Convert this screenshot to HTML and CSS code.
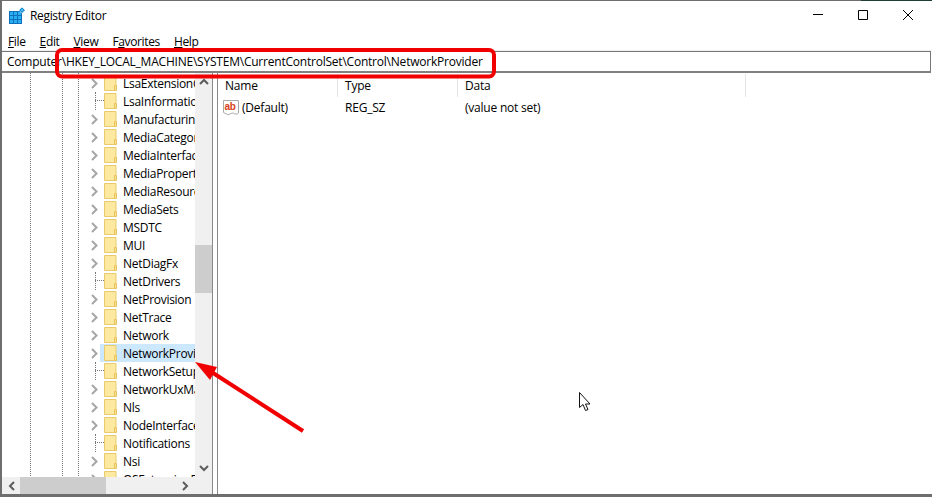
FILE: index.html
```html
<!DOCTYPE html>
<html lang="en">
<head>
<meta charset="utf-8">
<title>Registry Editor</title>
<link rel="stylesheet" href="styles.css">
</head>
<body>
<svg class="defs" width="0" height="0" aria-hidden="true">
  <defs>
    <symbol id="folder" viewBox="0 0 13 16">
      <path d="M.5.5h11.500v15H.5z" fill="#fde9a0" stroke="#e9cb6e"/>
      <path d="M10.500 15.500V10.500h2v5z" fill="#f9e08c" stroke="#e9c45c"/>
    </symbol>
    <symbol id="chev" viewBox="0 0 7 11">
      <path d="M1 1l4.500 4.500L1 10" fill="none" stroke="#a6a6a6" stroke-width="2"/>
    </symbol>
  </defs>
</svg>
<div class="window">
  <header class="titlebar">
    <svg class="appicon" viewBox="0 0 16 17" width="16" height="17">
      <path d="M0 4h13v13H0z" fill="#0f6fb8"/>
      <path d="M1 5h3v3H1zM5 5h3v3H5zM9 5h3v3H9zM1 9h3v3H1zM5 9h3v3H5zM9 9h3v3H9zM1 13h3v3H1zM5 13h3v3H5zM9 13h3v3H9z" fill="#2aaef2"/>
      <path d="M13 0l3.200 3.200L13 6.400 9.800 3.200z" fill="#1787cf" stroke="#fff" stroke-width=".6"/>
      <path d="M13 1.800l1.400 1.400L13 4.600l-1.400-1.400z" fill="#58c4f5"/>
    </svg>
    <span class="title">Registry Editor</span>
    <div class="controls">
      <svg width="12" height="12" viewBox="0 0 12 12"><path d="M1 5.500h10" stroke="#000" fill="none"/></svg>
      <svg width="12" height="12" viewBox="0 0 12 12"><path d="M1.500 1.500h9v9h-9z" stroke="#000" fill="none"/></svg>
      <svg width="12" height="12" viewBox="0 0 12 12"><path d="M1 1l10 10M11 1L1 11" stroke="#000" fill="none"/></svg>
    </div>
  </header>
  <nav class="menubar">
    <span><u>F</u>ile</span><span><u>E</u>dit</span><span><u>V</u>iew</span><span>F<u>a</u>vorites</span><span><u>H</u>elp</span>
  </nav>
  <div class="address">Computer\HKEY_LOCAL_MACHINE\SYSTEM\CurrentControlSet\Control\NetworkProvider</div>
  <main class="panes">
    <section class="treepane">
      <div class="treeview">
        <ul class="tree">
          <li class="row"><svg class="chev"><use href="#chev"/></svg><svg class="folder"><use href="#folder"/></svg><span class="name">LsaExtensionConfig</span></li>
          <li class="row leaf"><svg class="folder"><use href="#folder"/></svg><span class="name">LsaInformation</span></li>
          <li class="row"><svg class="chev"><use href="#chev"/></svg><svg class="folder"><use href="#folder"/></svg><span class="name">ManufacturingMode</span></li>
          <li class="row"><svg class="chev"><use href="#chev"/></svg><svg class="folder"><use href="#folder"/></svg><span class="name">MediaCategories</span></li>
          <li class="row"><svg class="chev"><use href="#chev"/></svg><svg class="folder"><use href="#folder"/></svg><span class="name">MediaInterfaces</span></li>
          <li class="row"><svg class="chev"><use href="#chev"/></svg><svg class="folder"><use href="#folder"/></svg><span class="name">MediaProperties</span></li>
          <li class="row"><svg class="chev"><use href="#chev"/></svg><svg class="folder"><use href="#folder"/></svg><span class="name">MediaResources</span></li>
          <li class="row"><svg class="chev"><use href="#chev"/></svg><svg class="folder"><use href="#folder"/></svg><span class="name">MediaSets</span></li>
          <li class="row"><svg class="chev"><use href="#chev"/></svg><svg class="folder"><use href="#folder"/></svg><span class="name">MSDTC</span></li>
          <li class="row"><svg class="chev"><use href="#chev"/></svg><svg class="folder"><use href="#folder"/></svg><span class="name">MUI</span></li>
          <li class="row"><svg class="chev"><use href="#chev"/></svg><svg class="folder"><use href="#folder"/></svg><span class="name">NetDiagFx</span></li>
          <li class="row leaf"><svg class="folder"><use href="#folder"/></svg><span class="name">NetDrivers</span></li>
          <li class="row"><svg class="chev"><use href="#chev"/></svg><svg class="folder"><use href="#folder"/></svg><span class="name">NetProvision</span></li>
          <li class="row"><svg class="chev"><use href="#chev"/></svg><svg class="folder"><use href="#folder"/></svg><span class="name">NetTrace</span></li>
          <li class="row"><svg class="chev"><use href="#chev"/></svg><svg class="folder"><use href="#folder"/></svg><span class="name">Network</span></li>
          <li class="row selected"><svg class="chev"><use href="#chev"/></svg><svg class="folder"><use href="#folder"/></svg><span class="name">NetworkProvider</span></li>
          <li class="row leaf"><svg class="folder"><use href="#folder"/></svg><span class="name">NetworkSetup2</span></li>
          <li class="row"><svg class="chev"><use href="#chev"/></svg><svg class="folder"><use href="#folder"/></svg><span class="name">NetworkUxManager</span></li>
          <li class="row"><svg class="chev"><use href="#chev"/></svg><svg class="folder"><use href="#folder"/></svg><span class="name">Nls</span></li>
          <li class="row"><svg class="chev"><use href="#chev"/></svg><svg class="folder"><use href="#folder"/></svg><span class="name">NodeInterfaces</span></li>
          <li class="row leaf"><svg class="folder"><use href="#folder"/></svg><span class="name">Notifications</span></li>
          <li class="row"><svg class="chev"><use href="#chev"/></svg><svg class="folder"><use href="#folder"/></svg><span class="name">Nsi</span></li>
          <li class="row"><svg class="chev"><use href="#chev"/></svg><svg class="folder"><use href="#folder"/></svg><span class="name">OSExtensionDatabase</span></li>
        </ul>
        <div class="vscroll">
          <svg class="sb-arrow" width="10" height="7" viewBox="0 0 10 7"><path d="M1 6l4-4 4 4" fill="none" stroke="#5c5c5c" stroke-width="2"/></svg>
          <div class="vtrack"><div class="vthumb"></div></div>
          <svg class="sb-arrow" width="10" height="7" viewBox="0 0 10 7"><path d="M1 1l4 4 4-4" fill="none" stroke="#5c5c5c" stroke-width="2"/></svg>
        </div>
      </div>
      <div class="hscroll">
        <svg width="7" height="10" viewBox="0 0 7 10"><path d="M6 1L2 5l4 4" fill="none" stroke="#5c5c5c" stroke-width="2"/></svg>
        <div class="hthumb"></div>
        <svg width="7" height="10" viewBox="0 0 7 10"><path d="M1 1l4 4-4 4" fill="none" stroke="#5c5c5c" stroke-width="2"/></svg>
      </div>
    </section>
    <section class="listpane">
      <div class="listhead">
        <span class="col col-name">Name</span><span class="col col-type">Type</span><span class="col col-data">Data</span>
      </div>
      <div class="listrow">
        <span class="col col-name cell-name">
          <svg width="16" height="16" viewBox="0 0 16 16"><path d="M.5 .5h15v12.500c-2 2-3.500 1-5 .3-2-1-4 1.700-6 1.200l-4-2z" fill="#fff" stroke="#a9a9a9"/><text class="ab" x="1.500" y="10">ab</text></svg>
          (Default)
        </span>
        <span class="col col-type">REG_SZ</span>
        <span class="col col-data">(value not set)</span>
      </div>
    </section>
  </main>
</div>
<svg class="overlay" width="932" height="497" viewBox="0 0 932 497" aria-hidden="true">
  <path d="M861 .5h71" stroke="#1e4034" fill="none"/>
  <rect x="57" y="50" width="437" height="26.500" rx="5" fill="none" stroke="#f00000" stroke-width="4"/>
  <path d="M303 431L210 371" stroke="#f00000" stroke-width="4" fill="none"/>
  <path d="M195 362L217 367 210 380z" fill="#f00000"/>
  <path d="M579.500 392.500v15l3.500-3 2.500 6 2.500-1-2.500-5.500h4.500z" fill="#fff" stroke="#111"/>
</svg>
</body>
</html>
```
FILE: styles.css
```css
* { box-sizing: border-box; }
html, body { margin: 0; padding: 0; }
body {
  width: 932px;
  height: 497px;
  overflow: hidden;
  background: #fff;
  font-family: "Open Sans", "Noto Sans", sans-serif;
  font-size: 12px;
  letter-spacing: -0.22px;
  color: #000;
}
.defs { position: absolute; }
.window {
  width: 932px;
  height: 497px;
  display: flex;
  flex-direction: column;
  border: solid #6e6e6e;
  border-width: 1px 0 3px 2px;
  background: #fff;
}
.titlebar {
  height: 30px;
  display: flex;
  align-items: center;
  padding: 0 0 2px 7px;
  flex: none;
}
.appicon { flex: none; }
.title { margin-left: 5px; letter-spacing: -0.33px; }
.controls {
  margin-left: auto;
  display: flex;
  gap: 33px;
  padding-right: 18px;
}
.menubar {
  height: 20px;
  display: flex;
  align-items: center;
  gap: 14px;
  padding: 1px 0 0 6px;
  flex: none;
  letter-spacing: -0.35px;
  border-bottom: 1px solid #f0f0f0;
}
.address {
  height: 22px;
  flex: none;
  margin-right: 1px;
  border-top: 1px solid #777;
  border-bottom: 2px solid #808080;
  border-right: 1px solid #777;
  padding-left: 5px;
  line-height: 19px;
  white-space: nowrap;
}
.panes {
  flex: 1;
  min-height: 0;
  display: flex;
}
.treepane {
  width: 211px;
  flex: none;
  display: flex;
  flex-direction: column;
  border-right: 1px solid #8a8a8a;
}
.treeview {
  flex: 1;
  min-height: 0;
  display: flex;
  background-image:
    repeating-linear-gradient(#777 0 1px, transparent 1px 2px),
    repeating-linear-gradient(#777 0 1px, transparent 1px 2px),
    repeating-linear-gradient(#777 0 1px, transparent 1px 2px);
  background-size: 1px 100%;
  background-position: 28px 0, 60px 0, 76px 0;
  background-repeat: no-repeat;
}
.tree {
  list-style: none;
  margin: 0;
  padding: 1px 0 0;
  flex: 1;
  min-width: 0;
  overflow: hidden;
  letter-spacing: -0.28px;
}
.row {
  height: 18px;
  margin-left: 89px;
  display: flex;
  align-items: center;
  white-space: nowrap;
  overflow: hidden;
  position: relative;
}
.chev { width: 7px; height: 11px; flex: none; }
.folder { width: 13px; height: 16px; flex: none; margin-left: 6px; }
.leaf { padding-left: 7px; }
.leaf::before {
  content: "";
  position: absolute;
  left: 4px;
  top: 8px;
  width: 9px;
  border-top: 1px dotted #777;
}
.leaf::after {
  content: "";
  position: absolute;
  left: 4px;
  top: 0;
  height: 18px;
  border-left: 1px dotted #777;
}
.name { margin-left: 6px; }
.selected { background: linear-gradient(#cce8ff, #cce8ff) no-repeat 9px 0 / 100% 100%; }
.vscroll {
  width: 17px;
  flex: none;
  background: #f0f0f0;
  display: flex;
  flex-direction: column;
  align-items: center;
  padding: 5px 0 5px;
}
.sb-arrow { flex: none; }
.vtrack { flex: 1; width: 100%; padding-top: 160px; }
.vthumb { height: 48px; background: #cdcdcd; }
.hscroll {
  height: 17px;
  flex: none;
  background: #f0f0f0;
  display: flex;
  align-items: center;
  padding: 0 23px 0 6px;
}
.hthumb { width: 86px; height: 100%; background: #cdcdcd; margin-left: 5px; margin-right: auto; }
.listpane {
  flex: 1;
  min-width: 0;
  margin-left: 4px;
  border-left: 1px solid #8a8a8a;
}
.listhead {
  height: 24px;
  display: flex;
  align-items: center;
}
.listhead .col { height: 23px; line-height: 23px; border-right: 1px solid #e5e5e5; padding-left: 7px; }
.col { display: block; }
.col-name { width: 120px; }
.col-type { width: 120px; }
.col-data { width: 288px; }
.listrow {
  height: 19px;
  margin-top: 1px;
  display: flex;
  align-items: center;
}
.listrow .col { padding-left: 7px; }
.listrow .cell-name { padding-left: 5px; display: flex; align-items: center; gap: 3px; }
.ab { font: bold 10px "Liberation Sans", sans-serif; fill: #d8401a; }
.overlay { position: absolute; left: 0; top: 0; pointer-events: none; }
```
